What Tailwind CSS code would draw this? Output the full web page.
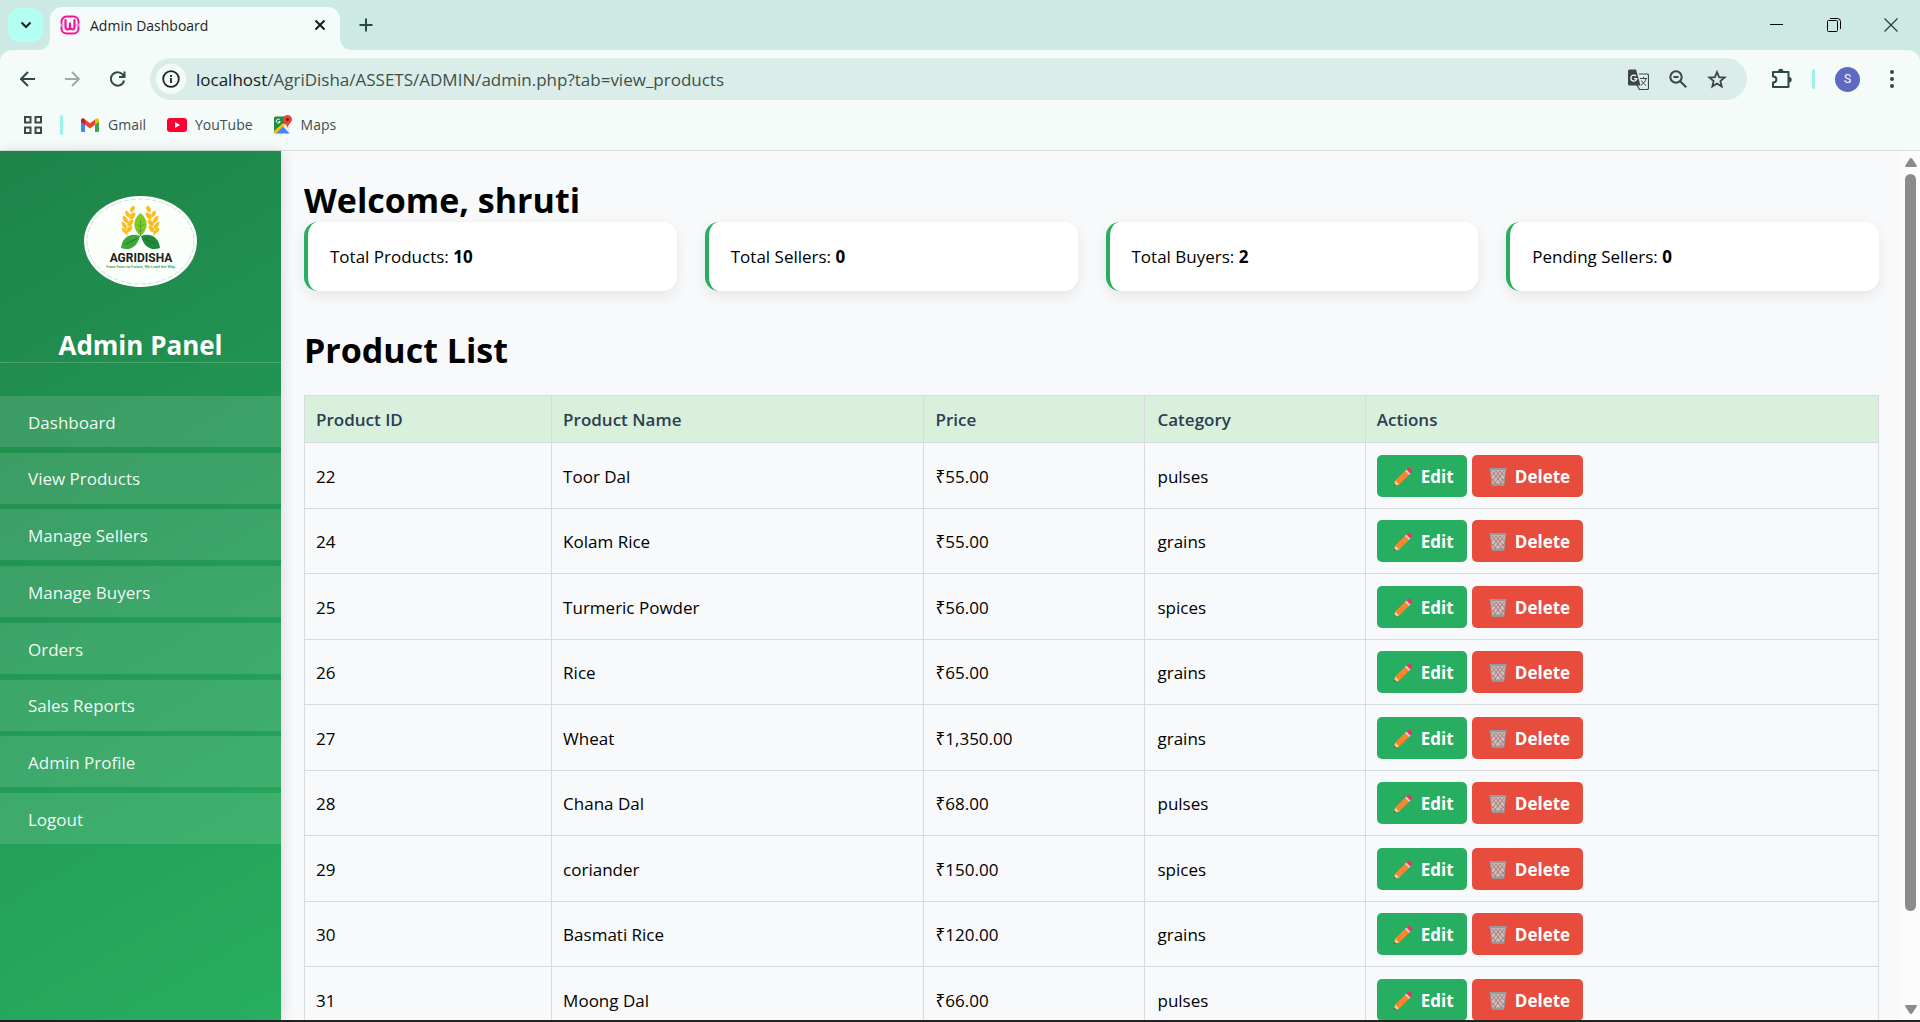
<!DOCTYPE html>
<html lang="en">
<head>
<meta charset="utf-8">
<title>Admin Dashboard</title>
<script src="https://cdn.jsdelivr.net/npm/@tailwindcss/browser@4"></script>
</head>
<body class="flex h-screen flex-col overflow-hidden bg-[#f5fbf9] font-['Open_Sans','Noto_Sans',sans-serif] text-black">

<!-- Shared icons -->
<svg class="hidden" aria-hidden="true">
  <symbol id="pencil" viewBox="0 0 20 20">
    <path d="M2.2 13.600 13.400 2.600l3.900 3.900L6.300 17.600z" fill="#ff822d"/>
    <path d="M2.200 13.600 1 18.800l5.300-1.200z" fill="#ffce7c"/>
    <path d="M1.500 16.700 1 18.800l2.200-.5z" fill="#402a32"/>
    <path d="m12 4 1.700-1.700 4 4L16 8z" fill="#d3d3d3"/>
    <path d="m13.400 2.500 1-1c.9-.9 2.200-.9 3.100 0l.9.9c.9.9.9 2.200 0 3.100l-1 1z" fill="#fb2b5f"/>
  </symbol>
  <symbol id="bin" viewBox="0 0 18 20">
    <path d="M1.500 2.500h15l-1.600 15.500h-11.800z" fill="#c9bfbf"/>
    <path d="m3 4 10 13M7 4l7.500 10M11 4l4 5M15 4 5 17M11 4 3.500 14M7 4 3 9M3 12l4 5M15 12l-4 5" stroke="#b07370" stroke-width=".9" fill="none"/>
    <path d="M1.500 2.500h15l-1.600 15.500h-11.800z" fill="none" stroke="#999" stroke-width="1"/>
    <path d="M.5 1h17v2.200H.5zM3 16.500h12v2.300H3z" fill="#999"/>
  </symbol>
</svg>

<!-- Tab strip -->
<header class="shrink-0">
  <div class="flex h-[50px] items-end bg-[#cde9e3]">
    <button aria-label="Search tabs" class="mb-2 ml-2 flex h-[34px] w-[35px] items-center justify-center rounded-xl bg-[#b4fff3]">
      <svg class="size-3" viewBox="0 0 12 12" fill="none" stroke="#10201d" stroke-width="2"><path d="m1.500 3.500 4.500 4.500 4.500-4.500"/></svg>
    </button>
    <div class="relative ml-[7px] flex h-[43px] w-[290px] items-center rounded-t-xl bg-[#f5fbf9] pr-3.5 pl-2.5">
      <svg class="absolute bottom-0 -left-3 size-3" viewBox="0 0 12 12"><path d="M12 0v12H0A12 12 0 0 0 12 0z" fill="#f5fbf9"/></svg>
      <svg class="absolute -right-3 bottom-0 size-3" viewBox="0 0 12 12"><path d="M0 0v12h12A12 12 0 0 1 0 0z" fill="#f5fbf9"/></svg>
      <svg class="mb-2 size-5" viewBox="0 0 20 20" fill="none" stroke="#f8109c" stroke-linecap="round">
        <path d="M1.500 8V6.500a5 5 0 0 1 5-5h7a5 5 0 0 1 5 5V8M1.500 12v1.500a5 5 0 0 0 5 5h7a5 5 0 0 0 5-5V12" stroke-width="2"/>
        <path d="M1 10h2M17 10h2" stroke-width="1.200"/>
        <path d="M5.500 5v6.500c0 4 4.500 4 4.500 0V7.500v4c0 4 4.500 4 4.500 0V5" stroke-width="2.200"/>
      </svg>
      <span class="mb-1.5 ml-2.5 flex-1 text-sm text-[#1b2624]">Admin Dashboard</span>
      <button aria-label="Close tab" class="mb-2">
        <svg class="size-3" viewBox="0 0 12 12" fill="none" stroke="#10201d" stroke-width="2"><path d="m1.500 1.500 9 9m0-9-9 9"/></svg>
      </button>
    </div>
    <button aria-label="New tab" class="mb-[18px] ml-[19px]">
      <svg class="size-3.5" viewBox="0 0 14 14" fill="none" stroke="#2c4a45" stroke-width="2"><path d="M7 .5v13M.5 7h13"/></svg>
    </button>
    <div class="mr-[22px] mb-[18px] ml-auto flex items-center gap-[43px] text-black">
      <button aria-label="Minimize"><svg class="size-3.5" viewBox="0 0 14 14" stroke="currentColor"><path d="M0 6.500h13"/></svg></button>
      <button aria-label="Restore"><svg class="size-3.5" viewBox="0 0 14 14" fill="none" stroke="currentColor"><path d="M.5 3.500a1 1 0 0 1 1-1h8a1 1 0 0 1 1 1v9a1 1 0 0 1-1 1h-8a1 1 0 0 1-1-1zM3 .5h7.500a3 3 0 0 1 3 3V11"/></svg></button>
      <button aria-label="Close"><svg class="size-3.5" viewBox="0 0 14 14" stroke="#263b37" stroke-width="1.200"><path d="m.5.5 13 13m0-13-13 13"/></svg></button>
    </div>
  </div>

  <!-- Toolbar -->
  <div class="bg-[#cde9e3]">
    <div class="flex h-[58px] items-center rounded-t-xl bg-[#f5fbf9] pl-5">
      <button aria-label="Back"><svg class="size-4" viewBox="0 0 16 16" fill="none" stroke="#2c4a45" stroke-width="2"><path d="M15 8H1.500M8 1 1 8l7 7"/></svg></button>
      <button aria-label="Forward" class="ml-[29px]"><svg class="size-4" viewBox="0 0 16 16" fill="none" stroke="#9dabaa" stroke-width="2"><path d="M0 8h13.500M7 1l7 7-7 7"/></svg></button>
      <button aria-label="Reload" class="ml-[29px]"><svg class="size-4" viewBox="0 0 16 16" fill="none" stroke="#2c4a45" stroke-width="2"><path d="M13.600 5A6.700 6.700 0 1 0 14.100 9.500M14.500 .5V6H9"/></svg></button>
      <div class="ml-6 flex h-[42px] flex-1 items-center rounded-full bg-[#daede8] pr-5 pl-1.5">
        <button aria-label="Site information" class="flex size-[30px] shrink-0 items-center justify-center rounded-full bg-[#f5fbf9]">
          <svg class="size-[18px]" viewBox="0 0 18 18" fill="none" stroke="#1b2624" stroke-width="1.800"><circle cx="9" cy="9" r="7.800"/><path d="M9 8v5M9 5v2"/></svg>
        </button>
        <div class="ml-2.5 flex-1 pt-0.5 text-[17px] text-[#40504d]"><span class="text-[#14201e]">localhost</span>/AgriDisha/ASSETS/ADMIN/admin.php?tab=view_products</div>
        <div class="flex items-center gap-5 text-[#3d4645]">
          <button aria-label="Translate"><svg class="size-[21px]" viewBox="0 0 21 21"><path d="M11 5h8a1.500 1.500 0 0 1 1.500 1.500V19a1.500 1.500 0 0 1-1.500 1.500h-7.500L9 16" fill="none" stroke="currentColor" stroke-width="1.200"/><path d="M1.500.5H8l4.500 16h-11A1.500 1.500 0 0 1 0 15V2A1.500 1.500 0 0 1 1.500.5z" fill="currentColor"/><path d="M8 7a3 3 0 1 0 .8 2.700H6" fill="none" stroke="#fff" stroke-width="1.300"/><path d="M12 9.500h7M15.500 8v1.500M18 9.500c-.5 3-2.500 5-5 6.500M13.500 11.500c1 2 2.500 3.500 4.500 5" fill="none" stroke="currentColor"/></svg></button>
          <button aria-label="Zoom"><svg class="size-[18px]" viewBox="0 0 18 18" fill="none" stroke="currentColor" stroke-width="2"><circle cx="7" cy="7" r="5.700"/><path d="m11.200 11.200 6 6M4.500 7h5"/></svg></button>
          <button aria-label="Bookmark this tab"><svg class="size-5" viewBox="0 0 20 20" fill="none" stroke="currentColor" stroke-width="1.800"><path d="m10 3 2.100 5.100 5.500.4-4.200 3.600 1.300 5.400L10 14.600l-4.700 2.900 1.300-5.400-4.200-3.600 5.500-.4z"/></svg></button>
        </div>
      </div>
      <button aria-label="Extensions" class="ml-6"><svg class="size-[22px]" viewBox="0 0 22 22"><path d="M2 4h15.500v15H2v-4.500c4.500 0 4.500-6 0-6z" fill="none" stroke="#2c4a45" stroke-width="2" stroke-linejoin="round"/><path d="M7 3.500a2.700 2.700 0 0 1 5.400 0zM18 9a2.700 2.700 0 0 1 0 5.400z" fill="#2c4a45"/></svg></button>
      <span class="ml-[19px] h-5 w-[3px] rounded bg-[#9cf3e8]"></span>
      <button aria-label="Profile" class="ml-5 size-[25px] rounded-full bg-[#5c6bc0] font-['Roboto',sans-serif] text-xs leading-[25px] text-white">S</button>
      <button aria-label="Menu" class="mr-[26px] ml-[30px]"><svg class="h-[18px] w-1" viewBox="0 0 4 18" fill="#2c4a45"><circle cx="2" cy="2" r="2"/><circle cx="2" cy="9" r="2"/><circle cx="2" cy="16" r="2"/></svg></button>
    </div>
  </div>

  <!-- Bookmarks -->
  <nav class="flex h-[43px] items-center border-b border-[#d3e4e0] pb-[9px] pl-6 text-sm text-[#3d4f4b]">
    <button aria-label="Apps"><svg class="size-[18px]" viewBox="0 0 18 18" fill="none" stroke="#3d4645" stroke-width="2"><path d="M1 1h5.500v5.500H1zM11.500 1H17v5.500h-5.500zM1 11.500h5.500V17H1zM11.500 11.500H17V17h-5.500z"/></svg></button>
    <span class="ml-[18px] h-5 w-[3px] rounded bg-[#9cf3e8]"></span>
    <a href="#" class="ml-[18px] flex items-center gap-[9px]">
      <svg class="h-3.5 w-[18px]" viewBox="0 0 18 14"><path d="M0 2v10.800c0 .7.500 1.200 1.200 1.200H4V5z" fill="#4285f4"/><path d="M14 5v9h2.800c.7 0 1.200-.5 1.200-1.200V2z" fill="#34a853"/><path d="M4 1.500v5.200l5 3.800 5-3.800V1.500L9 5.300z" fill="#ea4335"/><path d="M0 2.200C0 .2 2 -.5 3.500.9L4 1.300v5.400L0 3.700z" fill="#c5221f"/><path d="M18 2.200C18 .2 16 -.5 14.500.9l-.5.4v5.400l4-3z" fill="#fbbc04"/></svg>Gmail</a>
    <a href="#" class="ml-[21px] flex items-center gap-2">
      <svg class="h-3.5 w-5" viewBox="0 0 20 14"><rect width="20" height="14" rx="3" fill="#ff0033"/><path d="m8 4 5.200 3L8 10z" fill="#fff"/></svg>YouTube</a>
    <a href="#" class="ml-[21px] flex items-center gap-2">
      <svg class="size-[19px]" viewBox="0 0 19 19"><rect y="1.500" width="16" height="17" rx="2" fill="#e8eaed"/><path d="M2 1.500h9l1 6L0 18V3.500C0 2.400.9 1.500 2 1.500z" fill="#1e8e3e"/><path d="m0 16 9-8 2 2-9 8.500H1z" fill="#fbbc04"/><path d="m2 18.500 7-7 6.500 7z" fill="#4285f4"/><path d="M5.800 4.800a2 2 0 1 0 .4 1.700H4.500" fill="none" stroke="#fff"/><path d="M13.500 0A4.500 4.500 0 0 0 9 4.500c0 3.200 3.800 4 4.500 8.500.7-4.500 4.500-5.300 4.500-8.500A4.500 4.500 0 0 0 13.500 0z" fill="#ea4335"/><circle cx="13.500" cy="4.500" r="1.600" fill="#811411"/></svg>Maps</a>
  </nav>
</header>

<!-- Page -->
<div class="flex min-h-0 flex-1 bg-[#f8f9fb]">
  <aside class="z-10 flex w-[281px] shrink-0 flex-col bg-linear-150 from-[#1e8449] to-[#27ae60] text-white shadow-[2px_0_12px_rgba(0,0,0,0.12)]">
    <svg class="mx-auto mt-[45px] h-[91px] w-[113px]" viewBox="0 0 113 91" role="img" aria-label="AgriDisha logo">
      <ellipse cx="56.500" cy="45.500" rx="56.500" ry="45.500" fill="#fff"/>
      <ellipse cx="56.500" cy="45.500" rx="53.500" ry="42.500" fill="#fbfffc" stroke="#a9d0b9" stroke-width=".6" stroke-dasharray="5 2"/>
      <g fill="#fcba1c">
        <g id="wheat" stroke="#fcba1c" stroke-width=".8"><path d="M50 10c-4 1-4 4-3 6 3-1 4-3 3-6zM42 15c-1 3 0 5 3 6 1-3 0-5-3-6zM51 17c-4 0-6 2-5 6 3 0 5-2 5-6zM39 20c0 4 1 6 5 7 0-4-2-6-5-7zM49 24c-4 0-6 3-5 6 3 0 5-2 5-6zM38 26c0 4 2 6 5 7 0-4-2-6-5-7zM48 30c-3 0-5 2-5 6 3 0 5-2 5-6zM38 32c0 3 2 5 5 6 0-3-2-6-5-6z"/><path d="M43 36v4"/></g>
        <use href="#wheat" transform="matrix(-1 0 0 1 113 0)"/>
      </g>
      <path d="M56.500 17c8 6 8.500 16 0 23-8.500-7-8-17 0-23z" fill="#7ecb22"/>
      <path d="M56.500 24v16M56.500 31l3-3M56.500 31l-3-3M56.500 36l3-3M56.500 36l-3-3" stroke="#4c9a25" fill="none" stroke-width=".8"/>
      <path d="M56 40c-3 12-11 15-19 12 1-10 9-16 19-12z" fill="#3fa63b"/><path d="M57 40c3 12 11 15 19 12-1-10-9-16-19-12z" fill="#1f8a3b"/>
      <path d="M53 42.500 42 48M60 42.500 71 48" stroke="#176b2c" stroke-width=".8"/>
      <text x="57" y="66" text-anchor="middle" font-family="Roboto, sans-serif" font-size="12" font-weight="700" fill="#222">AGRIDISHA</text>
      <text x="57" y="72" text-anchor="middle" font-family="Roboto, sans-serif" font-size="4" font-weight="500" fill="#2a9a55">From Farm to Future, We Lead the Way.</text>
    </svg>
    <h2 class="mt-10 h-[36px] border-b border-white/20 text-center text-[26px] leading-9 font-bold">Admin Panel</h2>
    <nav class="mt-[33px] flex h-[448px] shrink-0 flex-col justify-between text-[17px] text-white/95">
      <a href="#" class="flex h-[51px] items-center bg-white/12 pt-0.5 pl-7">Dashboard</a>
      <a href="#" class="flex h-[51px] items-center bg-white/12 pt-0.5 pl-7">View Products</a>
      <a href="#" class="flex h-[51px] items-center bg-white/12 pt-0.5 pl-7">Manage Sellers</a>
      <a href="#" class="flex h-[51px] items-center bg-white/12 pt-0.5 pl-7">Manage Buyers</a>
      <a href="#" class="flex h-[51px] items-center bg-white/12 pt-0.5 pl-7">Orders</a>
      <a href="#" class="flex h-[51px] items-center bg-white/12 pt-0.5 pl-7">Sales Reports</a>
      <a href="#" class="flex h-[51px] items-center bg-white/12 pt-0.5 pl-7">Admin Profile</a>
      <a href="#" class="flex h-[51px] items-center bg-white/12 pt-0.5 pl-7">Logout</a>
    </nav>
  </aside>

  <main class="min-w-0 flex-1 overflow-hidden pt-6 pr-[22px] pl-[23px] text-[17px]">
    <h1 class="h-[47px] text-[34px] leading-[50px] font-bold">Welcome, shruti</h1>
    <section class="grid grid-cols-4 gap-7">
      <div class="flex h-[69px] items-center rounded-[14px] border-l-4 border-[#27ae60] bg-white pl-[22px] shadow-[0_5px_14px_rgba(0,0,0,0.08)]"><p>Total Products: <b>10</b></p></div>
      <div class="flex h-[69px] items-center rounded-[14px] border-l-4 border-[#27ae60] bg-white pl-[22px] shadow-[0_5px_14px_rgba(0,0,0,0.08)]"><p>Total Sellers: <b>0</b></p></div>
      <div class="flex h-[69px] items-center rounded-[14px] border-l-4 border-[#27ae60] bg-white pl-[22px] shadow-[0_5px_14px_rgba(0,0,0,0.08)]"><p>Total Buyers: <b>2</b></p></div>
      <div class="flex h-[69px] items-center rounded-[14px] border-l-4 border-[#27ae60] bg-white pl-[22px] shadow-[0_5px_14px_rgba(0,0,0,0.08)]"><p>Pending Sellers: <b>0</b></p></div>
    </section>
    <h1 class="mt-[34px] text-[34px] leading-[50px] font-bold">Product List</h1>
    <table class="mt-5 w-full table-fixed border-collapse text-left">
      <colgroup><col class="w-[15.7%]"><col class="w-[23.6%]"><col class="w-[14.1%]"><col class="w-[14%]"><col></colgroup>
      <thead class="bg-[#d9f0dd] text-[#2c3e50]">
        <tr class="h-[47px]">
          <th class="border border-[#d8dbdd] px-[11px] pt-0.5 font-semibold">Product ID</th>
          <th class="border border-[#d8dbdd] px-[11px] pt-0.5 font-semibold">Product Name</th>
          <th class="border border-[#d8dbdd] px-3 pt-0.5 font-semibold">Price</th>
          <th class="border border-[#d8dbdd] px-3 pt-0.5 font-semibold">Category</th>
          <th class="border border-[#d8dbdd] px-[11px] pt-0.5 font-semibold">Actions</th>
        </tr>
      </thead>
      <tbody id="products"></tbody>
    </table>
  </main>

  <!-- Scrollbar -->
  <div class="flex w-[19px] shrink-0 flex-col items-center bg-[#fcfcfc] pt-[7px] pb-1.5" aria-hidden="true">
    <svg class="h-[9px] w-3" viewBox="0 0 12 9" fill="#8b8b8b"><path d="M6 0q.8 0 1.300.8L12 8q0 1-1 1H1Q0 9 0 8L4.700.8Q5.200 0 6 0z"/></svg>
    <span class="mt-[7px] h-[737px] w-[11px] rounded-full bg-[#8b8b8b]"></span>
    <svg class="mt-auto h-[9px] w-3" viewBox="0 0 12 9" fill="#8b8b8b"><path d="M6 9q.8 0 1.300-.8L12 1q0-1-1-1H1Q0 0 0 1l4.700 7.200Q5.200 9 6 9z"/></svg>
  </div>
</div>
<div class="h-0.5 shrink-0 bg-[#222]"></div>

<script>
const products = [
  [22, 'Toor Dal', '55.00', 'pulses'],
  [24, 'Kolam Rice', '55.00', 'grains'],
  [25, 'Turmeric Powder', '56.00', 'spices'],
  [26, 'Rice', '65.00', 'grains'],
  [27, 'Wheat', '1,350.00', 'grains'],
  [28, 'Chana Dal', '68.00', 'pulses'],
  [29, 'coriander', '150.00', 'spices'],
  [30, 'Basmati Rice', '120.00', 'grains'],
  [31, 'Moong Dal', '66.00', 'pulses'],
];
document.getElementById('products').innerHTML = products.map(([id, name, price, category]) => `
  <tr class="odd:h-[66px] even:h-[65px]">
    <td class="border border-[#d8dbdd] px-[11px] pt-0.5">${id}</td>
    <td class="border border-[#d8dbdd] px-[11px] pt-0.5">${name}</td>
    <td class="border border-[#d8dbdd] px-3 pt-0.5">₹${price}</td>
    <td class="border border-[#d8dbdd] px-3 pt-0.5">${category}</td>
    <td class="border border-[#d8dbdd] px-[11px]">
      <div class="flex gap-[5px] font-bold text-white">
        <button class="flex h-[42px] w-[90px] items-center gap-2 rounded-[5px] bg-[#27ae60] pt-0.5 pl-4"><svg class="size-5"><use href="#pencil"/></svg>Edit</button>
        <button class="flex h-[42px] w-[111px] items-center gap-2 rounded-[5px] bg-[#e84c3d] pt-0.5 pl-[17px]"><svg class="h-5 w-[18px]"><use href="#bin"/></svg>Delete</button>
      </div>
    </td>
  </tr>`).join('');
</script>
</body>
</html>
